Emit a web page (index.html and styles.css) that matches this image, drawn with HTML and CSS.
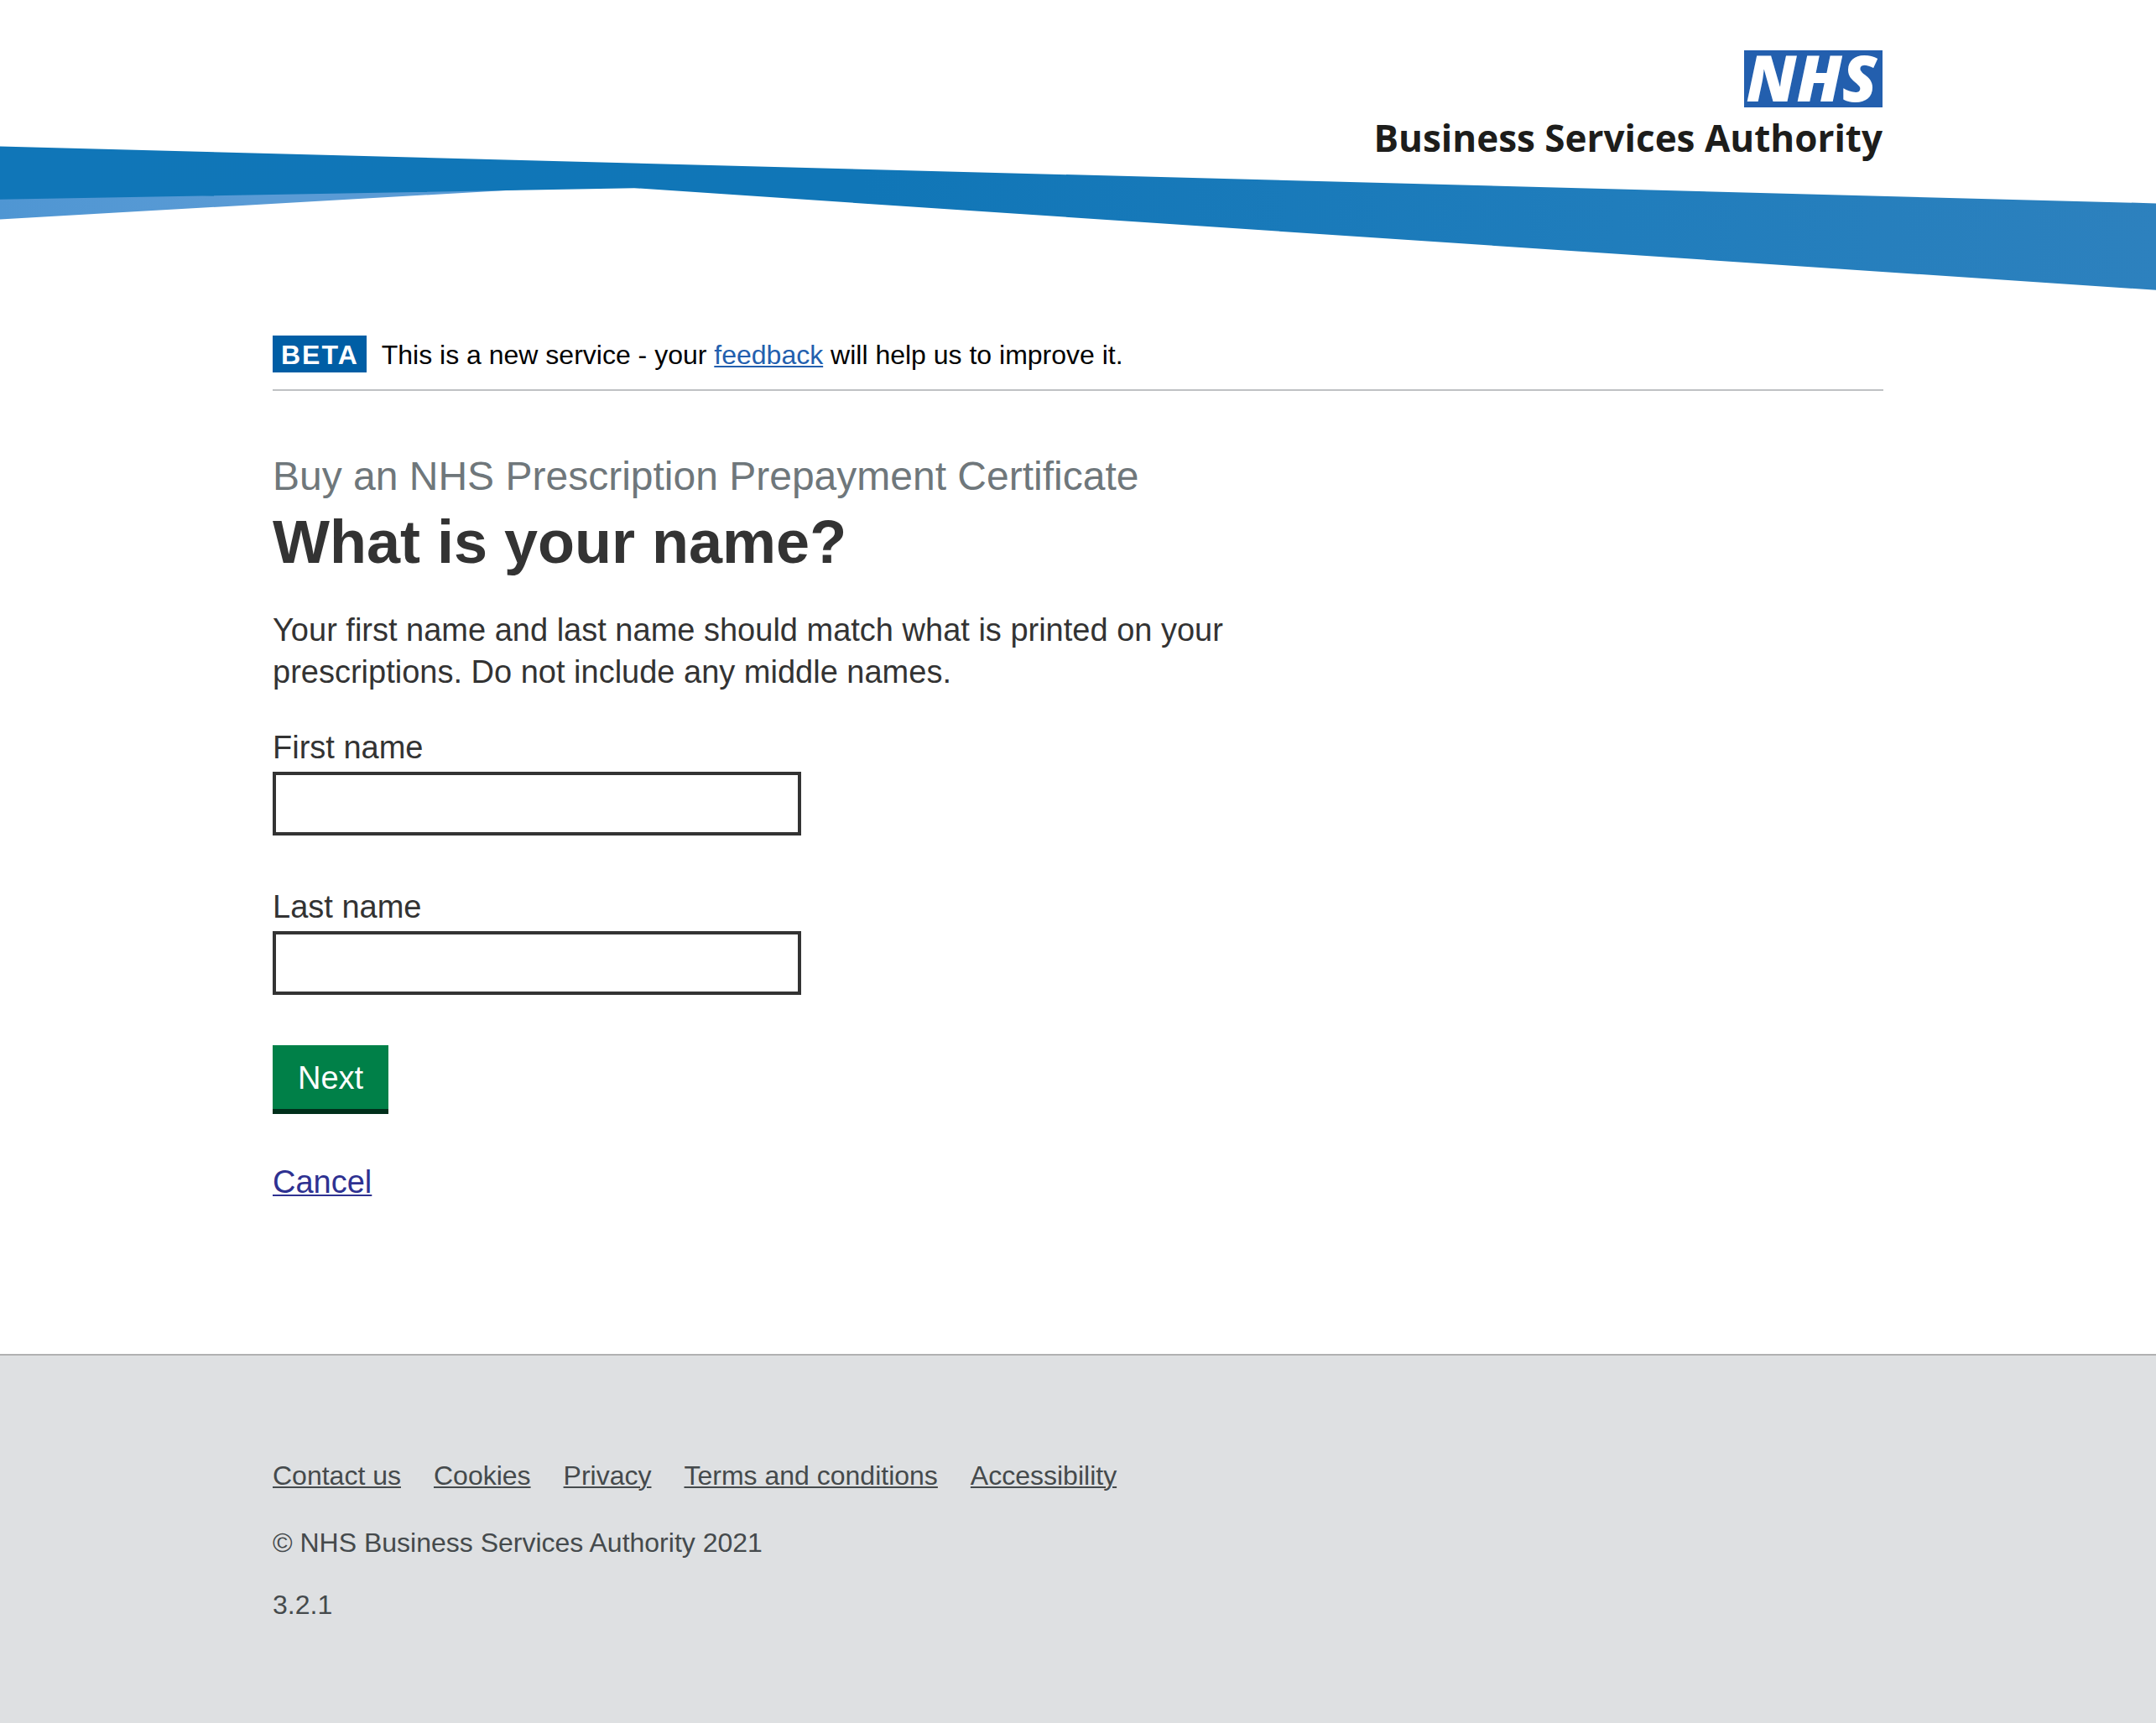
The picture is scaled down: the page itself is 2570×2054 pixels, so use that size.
FILE: index.html
```html
<!DOCTYPE html>
<html lang="en">
<head>
  <meta charset="utf-8">
  <meta name="viewport" content="width=device-width, initial-scale=1">
  <title>What is your name? - Buy an NHS Prescription Prepayment Certificate</title>
  <link rel="stylesheet" href="styles.css">
</head>
<body>
  <header class="header">
    <svg class="header-ribbon" viewBox="0 0 2570 172" preserveAspectRatio="none" aria-hidden="true">
      <defs>
        <linearGradient id="ribbon-dark" x1="0" x2="1" y1="0" y2="0">
          <stop offset="0" stop-color="#1076b8"/>
          <stop offset="0.4" stop-color="#1076b7"/>
          <stop offset="0.75" stop-color="#207dbc"/>
          <stop offset="1" stop-color="#2d81be"/>
        </linearGradient>
        <linearGradient id="ribbon-light" x1="0" x2="1" y1="0" y2="0">
          <stop offset="0" stop-color="#4f96d3"/>
          <stop offset="0.5" stop-color="#5a9bd5"/>
          <stop offset="1" stop-color="#5a9bd5"/>
        </linearGradient>
      </defs>
      <path fill="url(#ribbon-light)" d="M0 60 L620 50 L620 52 L0 87.4 Z"/>
      <path fill="url(#ribbon-dark)" d="M0 0.6 L2570 68.4 L2570 171.8 L756 50.2 L0 63.8 Z"/>
    </svg>
    <div class="container header-inner">
      <a class="logo" href="#">
        <span class="logo-mark">NHS</span>
        <span class="logo-name">Business Services Authority</span>
      </a>
    </div>
  </header>

  <div class="container">
    <div class="phase-banner">
      <strong class="phase-tag">BETA</strong>
      <span>This is a new service - your <a class="feedback-link" href="#">feedback</a> will help us to improve it.</span>
    </div>

    <main class="main">
      <h1 class="heading">
        <span class="heading-caption">Buy an NHS Prescription Prepayment Certificate</span>
        What is your name?
      </h1>
      <p class="intro">Your first name and last name should match what is printed on your prescriptions. Do not include any middle names.</p>
      <form class="form">
        <div class="field">
          <label for="first-name">First name</label>
          <input class="text-input" id="first-name" name="first-name" type="text">
        </div>
        <div class="field">
          <label for="last-name">Last name</label>
          <input class="text-input" id="last-name" name="last-name" type="text">
        </div>
        <button class="button" type="submit">Next</button>
        <a class="cancel-link" href="#">Cancel</a>
      </form>
    </main>
  </div>

  <footer class="footer">
    <div class="container">
      <ul class="footer-links">
        <li><a href="#">Contact us</a></li>
        <li><a href="#">Cookies</a></li>
        <li><a href="#">Privacy</a></li>
        <li><a href="#">Terms and conditions</a></li>
        <li><a href="#">Accessibility</a></li>
      </ul>
      <p class="copyright">© NHS Business Services Authority 2021</p>
      <p class="version">3.2.1</p>
    </div>
  </footer>
</body>
</html>
```

FILE: styles.css
```css
*,
*::before,
*::after {
  box-sizing: border-box;
}

body {
  margin: 0;
  min-height: 100vh;
  display: flex;
  flex-direction: column;
  background: #fff;
  color: #333;
  font-family: "Liberation Sans", Arial, sans-serif;
  font-size: 38px;
  line-height: 50px;
}

a {
  text-decoration-thickness: 2px;
  text-underline-offset: 2px;
}

.container {
  width: 100%;
  max-width: 1920px;
  margin: 0 auto;
}

/* The ribbon and the logo share one grid cell so the logo sits over it */
.header {
  display: grid;
}

.header-ribbon {
  grid-area: 1 / 1;
  width: 100%;
  height: 172px;
  margin-top: 174px;
}

.header-inner {
  grid-area: 1 / 1;
  display: flex;
  justify-content: flex-end;
  align-items: flex-start;
  padding: 60px 1px 0 0;
}

.logo {
  display: flex;
  flex-direction: column;
  align-items: flex-end;
  gap: 6px;
  color: #1d1d1b;
  text-decoration: none;
}

.logo-mark {
  width: 165px;
  height: 68px;
  padding-right: 4px;
  background: #235fae;
  color: #fff;
  font: italic 800 76px/64px "Open Sans", "Noto Sans", sans-serif;
  text-align: center;
}

.logo-name {
  font: 700 44px/60px "Open Sans", "Noto Sans", sans-serif;
  white-space: nowrap;
}

.phase-banner {
  display: flex;
  align-items: baseline;
  gap: 18px;
  margin-top: 54px;
  padding-bottom: 20px;
  border-bottom: 2px solid #bfc1c3;
  color: #000;
  font-size: 32px;
  line-height: 42px;
}

.phase-tag {
  padding: 2px 9px 0 10px;
  background: #005ea5;
  color: #fff;
  letter-spacing: 2px;
}

.feedback-link {
  color: #235fae;
}

.main {
  padding: 72px 0 180px;
}

.heading {
  margin: 0 0 40px;
  font-size: 72px;
  line-height: 80px;
}

.heading-caption {
  display: block;
  margin-bottom: 8px;
  color: #6f777b;
  font-size: 48px;
  font-weight: 400;
  line-height: 60px;
}

.intro {
  max-width: 1200px;
  margin: 0 0 40px;
}

.form {
  display: flex;
  flex-direction: column;
  align-items: flex-start;
  gap: 60px;
}

.field {
  display: flex;
  flex-direction: column;
  gap: 4px;
}

.text-input {
  width: 630px;
  height: 76px;
  padding: 8px;
  border: 4px solid #333;
  border-radius: 0;
  background: #fff;
  color: #333;
  font: inherit;
}

.button {
  margin: 0 0 2px;
  padding: 14px 30px 12px;
  border: 0;
  background: #008048;
  box-shadow: 0 6px 0 #002f1b;
  color: #fff;
  font: inherit;
}

.cancel-link {
  color: #2e3191;
}

.footer {
  flex: 1;
  padding: 123px 0 80px;
  border-top: 2px solid #b0b1b2;
  background: #dee0e2;
  color: #454a4c;
  font-size: 32px;
  line-height: 40px;
}

.footer a {
  color: inherit;
}

.footer-links {
  display: flex;
  flex-wrap: wrap;
  gap: 39px;
  margin: 0 0 40px;
  padding: 0;
  list-style: none;
}

.copyright {
  margin: 0 0 34px;
}

.version {
  margin: 0;
}
```
